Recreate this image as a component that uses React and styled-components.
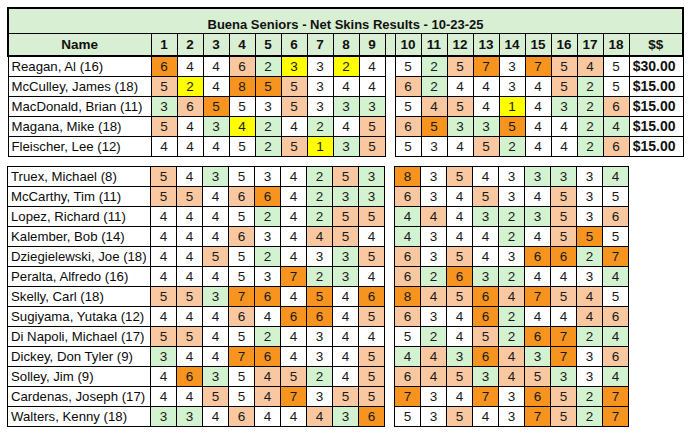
import React from 'react'
import styled, { createGlobalStyle } from 'styled-components'

const GlobalStyle = createGlobalStyle`
  html, body {
    margin: 0;
    background: #ffffff;
  }
  body {
    font-family: "Liberation Sans", Arial, sans-serif;
    color: #111;
  }
`

const tones = {
  w: '#ffffff',
  g: '#d3f2cf',
  p: '#f9c8a0',
  o: '#f7941f',
  y: '#ffff00',
}

const winners = [
  { name: 'Reagan, Al (16)', front: ['644623324', 'owwpgywyw'], back: ['525737545', 'wgpowoppw'], money: '$30.00' },
  { name: 'McCulley, James (18)', front: ['524855344', 'pywoopwww'], back: ['624434525', 'pgwwwwpgw'], money: '$15.00' },
  { name: 'MacDonald, Brian (11)', front: ['365535333', 'gpowwpwgg'], back: ['545414326', 'wppwywggp'], money: '$15.00' },
  { name: 'Magana, Mike (18)', front: ['543424245', 'pwgygwgwp'], back: ['653354424', 'poggowwgg'], money: '$15.00' },
  { name: 'Fleischer, Lee (12)', front: ['444525135', 'wwwwgpygp'], back: ['534524426', 'wwwpgwwgp'], money: '$15.00' },
]

const field = [
  { name: 'Truex, Michael (8)', front: ['543534253', 'pwgwwwgpg'], back: ['835433334', 'owpwwggwg'] },
  { name: 'McCarthy, Tim (11)', front: ['554664233', 'ppwpowggg'], back: ['634534535', 'pwwpwwpww'] },
  { name: 'Lopez, Richard (11)', front: ['444524255', 'wwwwgwgpp'], back: ['444323536', 'gpwgggpwp'] },
  { name: 'Kalember, Bob (14)', front: ['444634454', 'wwwpwwppw'], back: ['434424555', 'gwwwgwpow'] },
  { name: 'Dziegielewski, Joe (18)', front: ['445524335', 'wwpwgwwgp'], back: ['635436627', 'pwpwwoogo'] },
  { name: 'Peralta, Alfredo (16)', front: ['444537234', 'wwwwwoggw'], back: ['626324434', 'pgoggwwwg'] },
  { name: 'Skelly, Carl (18)', front: ['553764546', 'ppgoowowo'], back: ['845647545', 'oppopoppw'] },
  { name: 'Sugiyama, Yutaka (12)', front: ['444646645', 'wwwpwoowp'], back: ['634624446', 'pwwogwwpp'] },
  { name: 'Di Napoli, Michael (17)', front: ['554524344', 'ppwwgwwww'], back: ['524526724', 'wgwpgoogg'] },
  { name: 'Dickey, Don Tyler (9)', front: ['344764345', 'gwwoowwwp'], back: ['443643736', 'gpgopgowp'] },
  { name: 'Solley, Jim (9)', front: ['463545245', 'wogwppgwp'], back: ['645345334', 'pppgppgwg'] },
  { name: 'Cardenas, Joseph (17)', front: ['445547355', 'wwpwpowpp'], back: ['734736527', 'owwowopgo'] },
  { name: 'Walters, Kenny (18)', front: ['334644436', 'ggwpwwpgo'], back: ['535437527', 'wwpwwopgo'] },
]

const Page = styled.div`
  padding: 7px 0 0 7px;
  display: flex;
  flex-direction: column;
  gap: 9px;
`

const Sheet = styled.table`
  border-collapse: collapse;
  table-layout: fixed;
  width: ${(p) => p.$width}px;
  font-size: 13px;
`

const Col = styled.col`
  width: ${(p) => p.$w}px;
`

const TitleCell = styled.td`
  height: 23px;
  padding: 0 0 1px;
  background: #d9efd3;
  border: 2px solid #000;
  border-bottom: 1px solid #000;
  font-weight: bold;
  font-size: 13px;
  text-align: center;
  vertical-align: bottom;
`

const HeadCell = styled.th`
  height: 21px;
  padding: 0;
  background: #d9efd3;
  border: 1px solid #000;
  border-bottom: 2px solid #000;
  font-weight: bold;
  font-size: 13.5px;
  text-align: center;
  &:first-child {
    border-left: 2px solid #000;
  }
  &:last-child {
    border-right: 2px solid #000;
  }
`

const HeadGap = styled.th`
  padding: 0;
  background: #d9efd3;
  border-top: 1px solid #000;
  border-bottom: 2px solid #000;
`

const Row = styled.tr`
  height: 20px;
`

const NameCell = styled.td`
  padding: 0 0 0 3px;
  border: 1px solid #000;
  white-space: nowrap;
  overflow: hidden;
  text-align: left;
  font-size: 13.2px;
  color: #0a0a0a;
`

const ScoreCell = styled.td`
  padding: 0;
  border: 1px solid #000;
  text-align: center;
  background: ${(p) => tones[p.$tone]};
  color: #1a1a1a;
  font-size: 13.5px;
`

const GapCell = styled.td`
  padding: 0;
  border-left: 1px solid #000;
  border-right: 1px solid #000;
  background: #fff;
`

const MoneyCell = styled.td`
  padding: 0 7px 0 0;
  border: 1px solid #000;
  text-align: right;
  font-weight: bold;
  font-size: 14px;
`

const holes = Array.from({ length: 18 }, (_, i) => i + 1)

function Scores({ set }) {
  const [scores, colours] = set
  return scores.split('').map((s, i) => (
    <ScoreCell key={i} $tone={colours[i]}>{s}</ScoreCell>
  ))
}

function Columns({ money }) {
  return (
    <colgroup>
      <Col $w={143} />
      {holes.slice(0, 9).map((h) => <Col key={h} $w={26} />)}
      <Col $w={10} />
      {holes.slice(9).map((h) => <Col key={h} $w={26} />)}
      {money && <Col $w={54} />}
    </colgroup>
  )
}

export default function App() {
  return (
    <Page>
      <GlobalStyle />
      <Sheet $width={675}>
        <Columns money />
        <tbody>
          <tr>
            <TitleCell colSpan={21}>Buena Seniors - Net Skins Results - 10-23-25</TitleCell>
          </tr>
          <tr>
            <HeadCell>Name</HeadCell>
            {holes.slice(0, 9).map((h) => <HeadCell key={h}>{h}</HeadCell>)}
            <HeadGap />
            {holes.slice(9).map((h) => <HeadCell key={h}>{h}</HeadCell>)}
            <HeadCell>$$</HeadCell>
          </tr>
          {winners.map((r) => (
            <Row key={r.name}>
              <NameCell>{r.name}</NameCell>
              <Scores set={r.front} />
              <GapCell />
              <Scores set={r.back} />
              <MoneyCell>{r.money}</MoneyCell>
            </Row>
          ))}
        </tbody>
      </Sheet>

      <Sheet $width={621}>
        <Columns />
        <tbody>
          {field.map((r) => (
            <Row key={r.name}>
              <NameCell>{r.name}</NameCell>
              <Scores set={r.front} />
              <GapCell />
              <Scores set={r.back} />
            </Row>
          ))}
        </tbody>
      </Sheet>
    </Page>
  )
}
